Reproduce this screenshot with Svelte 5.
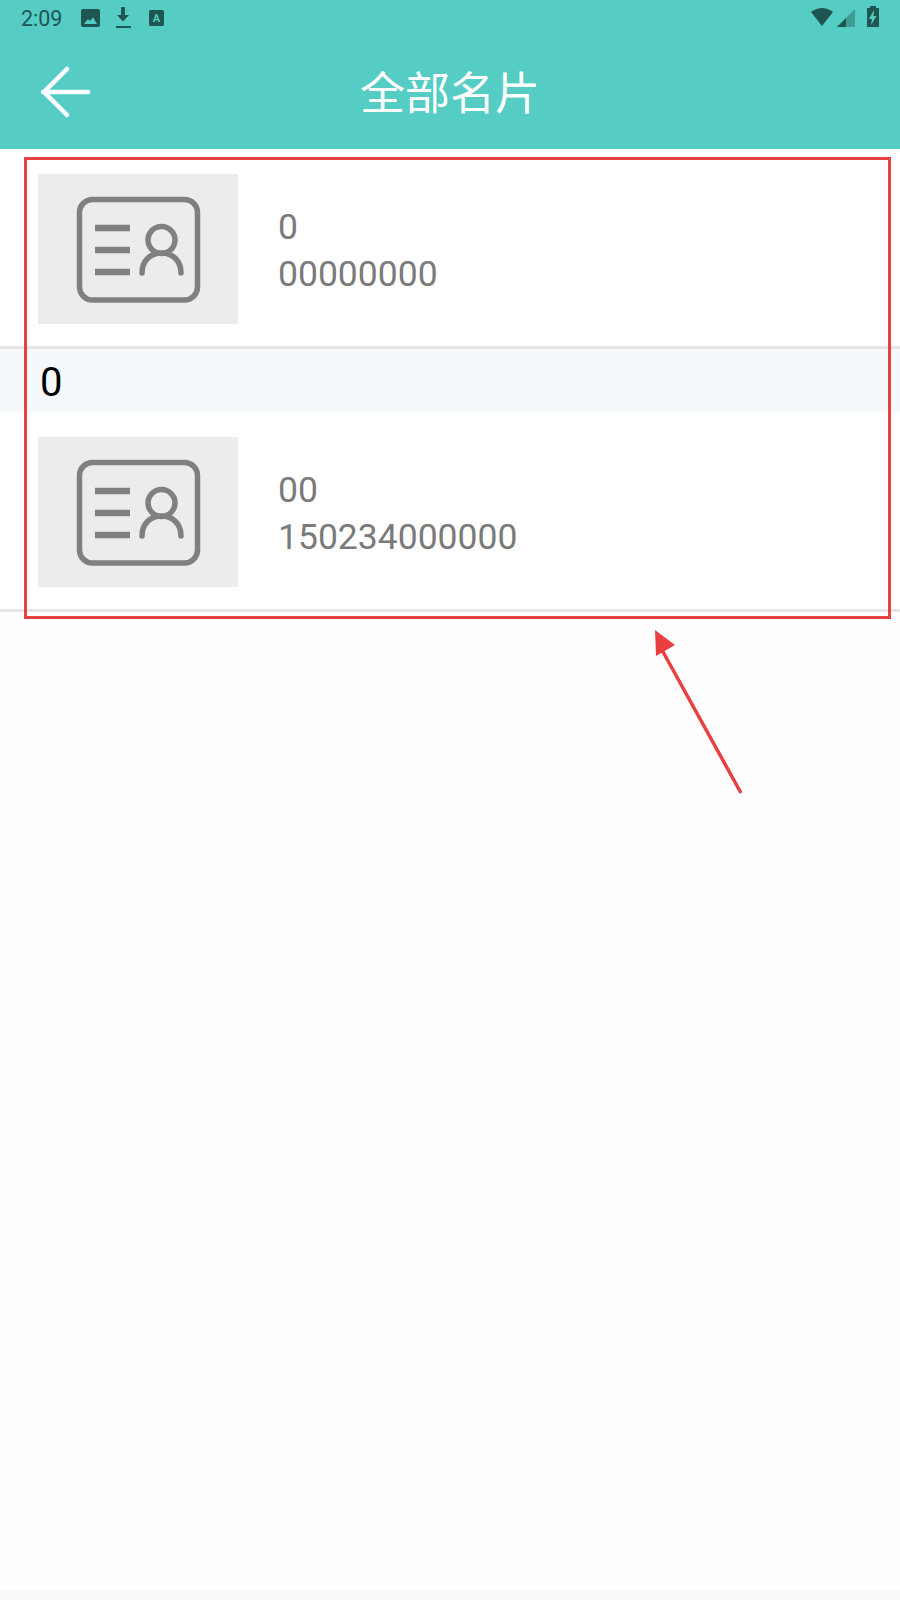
<script>
    const cards = [
        { name: "0", phone: "00000000" },
        { group: "0", name: "00", phone: "150234000000" }
    ];
</script>

{#snippet thumb()}
    <svg class="thumb" viewBox="0 0 200 150" width="200" height="150">
        <rect x="41.500" y="25.500" width="118" height="100.500" rx="13" fill="none" stroke="#808080" stroke-width="5.500" />
        <path d="M57 54H92M57 76H92M57 98H92" fill="none" stroke="#808080" stroke-width="6.500" />
        <circle cx="123.500" cy="66" r="13.500" fill="none" stroke="#808080" stroke-width="5.500" />
        <path d="M104 99C104 87 112 79 123.500 79C135 79 143 87 143 99" fill="none" stroke="#808080" stroke-width="5.500" stroke-linecap="round" />
    </svg>
{/snippet}

<div class="page">
    <header>
        <div class="status">
            <span class="time">2:09</span>
            <svg class="note-icons" width="90" height="24" viewBox="0 0 90 24">
                <path fill-rule="evenodd" d="M3 2H18Q20 2 20 4V18Q20 20 18 20H3Q1 20 1 18V4Q1 2 3 2ZM4 17H17L13 10.500L10 14L8 12Z" fill="#1f5652" />
                <path d="M41 0H45V8H49L43 14.500L37 8H41Z" fill="#1f5652" />
                <rect x="36" y="19" width="15" height="2" fill="#1f5652" />
                <rect x="69" y="3" width="15" height="16" rx="1.500" fill="#1f5652" />
                <text x="76.500" y="15" class="tiny">A</text>
            </svg>
            <svg class="sys-icons" width="72" height="24" viewBox="0 0 72 24">
                <path d="M1 7Q12 -1 23 7L12 21Z" fill="#1f5652" />
                <path d="M45 4V22H27Z" fill="#1f5652" opacity="0.4" />
                <path d="M36 13V22H27Z" fill="#1f5652" />
                <path fill-rule="evenodd" d="M57 3H60V1H66V3H69V22H57ZM64 5L59 14H62L61 20L66.500 11H63.500Z" fill="#1f5652" />
            </svg>
        </div>
        <div class="toolbar">
            <svg class="back" width="50" height="52" viewBox="0 0 50 52">
                <path d="M2 26H47M26 3L3 26L26 49" fill="none" stroke="#fff" stroke-width="4.500" stroke-linecap="round" />
            </svg>
            <h1>全部名片</h1>
        </div>
    </header>

    {#each cards as card}
        {#if card.group}
            <div class="group">{card.group}</div>
        {/if}
        <div class="card">
            {@render thumb()}
            <div class="info">
                <span>{card.name}</span>
                <span>{card.phone}</span>
            </div>
        </div>
    {/each}

    <div class="spacer"></div>
    <div class="nav-strip"></div>

    <!-- annotation drawn over the screenshot -->
    <div class="mark"></div>
    <svg class="arrow" width="110" height="170" viewBox="0 0 110 170">
        <path d="M22 20L101 163" fill="none" stroke="#e84040" stroke-width="3.500" />
        <path d="M15 0L16 26L35 15Z" fill="#e84040" />
    </svg>
</div>

<style>
    :global(body) {
        margin: 0;
        background: #fefefe;
    }

    .page {
        position: relative;
        display: flex;
        flex-direction: column;
        height: 1600px;
        font-family: Roboto, "Noto Sans CJK SC", sans-serif;
    }

    header {
        height: 149px;
        background: #55ccc4;
        flex: none;
    }

    .status {
        display: flex;
        align-items: center;
        height: 37px;
        color: #1f5652;
        font-size: 21.500px;
    }

    .time {
        margin-left: 21px;
        line-height: 38px;
        margin-top: 1px;
    }

    .note-icons {
        margin-left: 18px;
    }

    .tiny {
        font-size: 11px;
        font-weight: 700;
        fill: #55ccc4;
        text-anchor: middle;
    }

    .sys-icons {
        margin-left: auto;
        margin-right: 18px;
        margin-top: -3px;
    }

    .toolbar {
        position: relative;
        display: flex;
        align-items: center;
        justify-content: center;
        height: 112px;
    }

    .back {
        position: absolute;
        left: 41px;
        top: 29px;
    }

    h1 {
        margin: 0;
        font-size: 45px;
        font-weight: 400;
        color: #fff;
        line-height: 1;
        margin-top: 2px;
    }

    .card {
        display: flex;
        align-items: flex-start;
        padding: 25px 0 22px 38px;
        border-bottom: 3px solid #e5e5e5;
        background: #fff;
    }

    .thumb {
        display: block;
        background: #ececec;
        flex: none;
    }

    .info {
        display: flex;
        flex-direction: column;
        justify-content: center;
        margin-left: 40px;
        padding-top: 4px;
        height: 146px;
        color: #7a7a7a;
        font-size: 35.500px;
        line-height: 47px;
    }

    .group {
        height: 61px;
        padding: 2px 0 0 40px;
        background: #f5f9fc;
        color: #000;
        font-size: 40px;
        line-height: 63px;
    }

    .spacer {
        flex: 1;
    }

    .nav-strip {
        height: 10px;
        background: #fafafa;
    }

    .mark {
        position: absolute;
        left: 24px;
        top: 157px;
        width: 861px;
        height: 456px;
        border: 3px solid #e84040;
    }

    .arrow {
        position: absolute;
        left: 640px;
        top: 630px;
    }
</style>
